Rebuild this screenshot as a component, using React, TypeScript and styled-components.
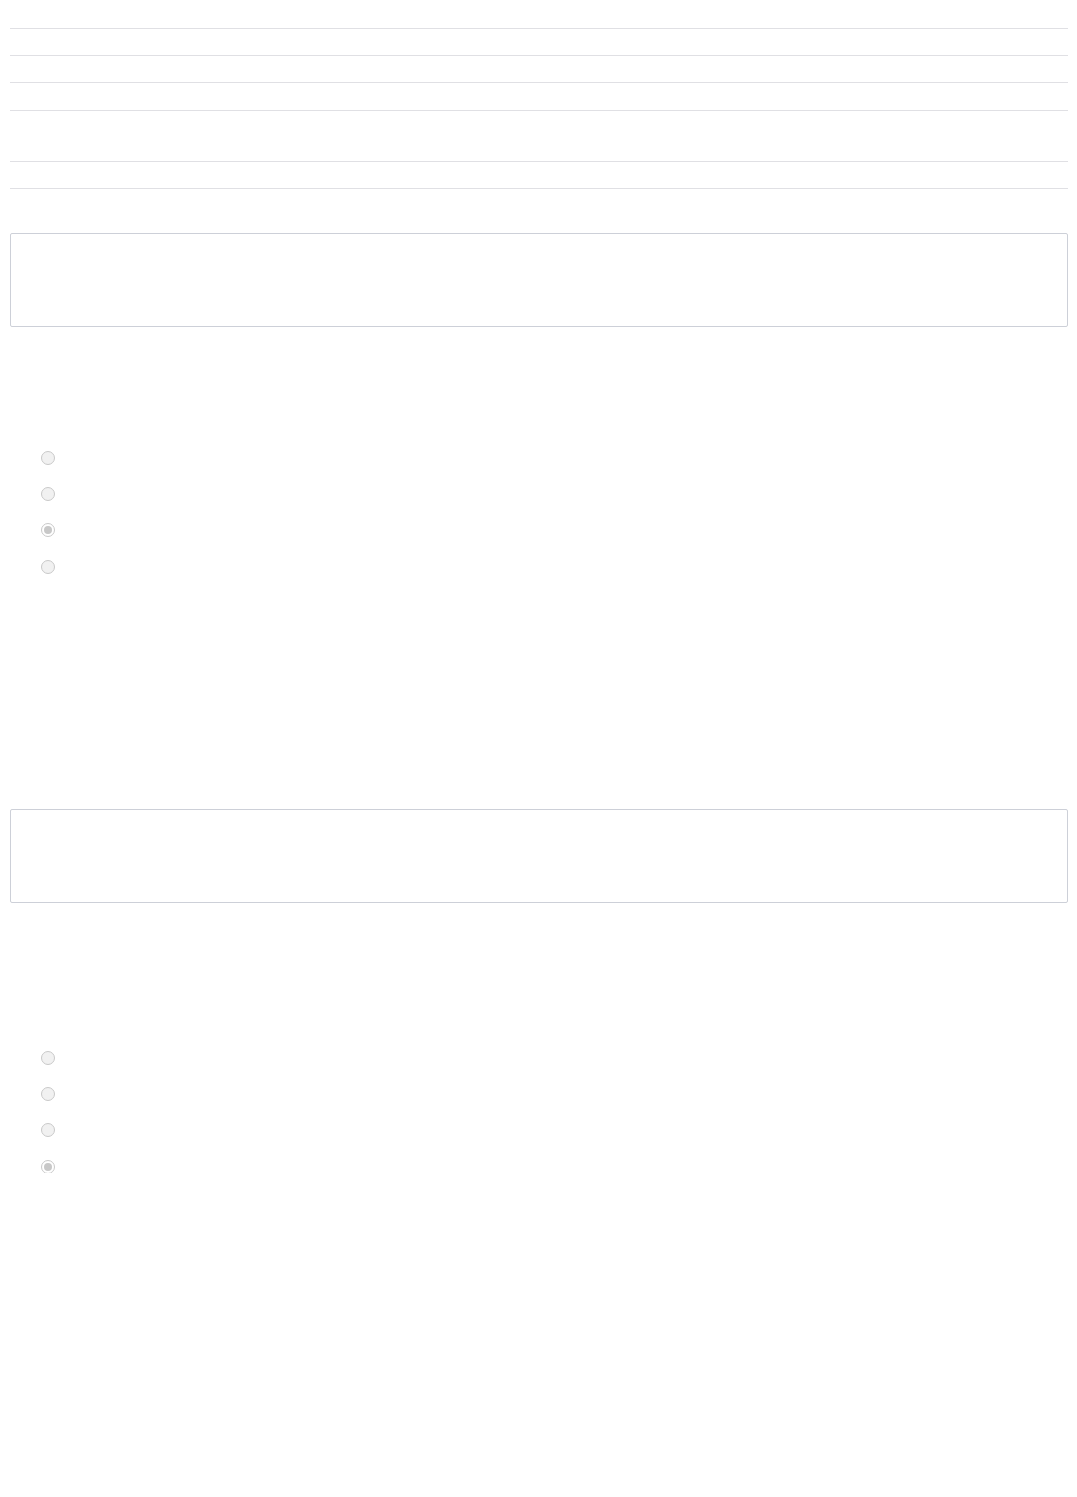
import React from "react";
import styled, { createGlobalStyle } from "styled-components";

const Global = createGlobalStyle`
  html, body { margin: 0; padding: 0; background: #ffffff; }
  body { font-family: "Liberation Sans", Arial, sans-serif; font-size: 14px; color: #333; }
`;

const Page = styled.div`
  padding: 0 9px 0 10px;
  display: flex;
  flex-direction: column;
`;

const List = styled.div`
  display: flex;
  flex-direction: column;
`;

const Row = styled.div<{ $h: number }>`
  height: ${(p) => p.$h}px;
  border-bottom: 1px solid #e0e0e4;
`;

const Box = styled.div<{ $top: number }>`
  margin-top: ${(p) => p.$top}px;
  height: 92px;
  border: 1px solid #cdd0d8;
  border-radius: 2px;
  background: #ffffff;
`;

const RadioGroup = styled.div<{ $top: number }>`
  margin-top: ${(p) => p.$top}px;
  padding-left: 31px;
  display: flex;
  flex-direction: column;
  gap: 23.4px;
`;

const RadioItem = styled.label`
  display: flex;
  align-items: center;
  height: 13px;
`;

const Dot = styled.span<{ $on?: boolean }>`
  box-sizing: border-box;
  width: 14px;
  height: 14px;
  margin: -0.5px;
  border-radius: 50%;
  border: 1px solid #c9c9c9;
  background: ${(p) => (p.$on ? "#ffffff" : "#f1f1f1")};
  display: flex;
  align-items: center;
  justify-content: center;
  &::after {
    content: "";
    display: ${(p) => (p.$on ? "block" : "none")};
    width: 8px;
    height: 8px;
    border-radius: 50%;
    background: #c8c8c8;
  }
`;

const rows = [28, 26, 26, 27, 50, 26];

export default function App() {
  return (
    <>
      <Global />
      <Page>
        <List>
          {rows.map((h, i) => (
            <Row key={i} $h={h} />
          ))}
        </List>
        <Box $top={44} />
        <RadioGroup $top={124}>
          {[false, false, true, false].map((on, i) => (
            <RadioItem key={i}>
              <Dot $on={on} />
            </RadioItem>
          ))}
        </RadioGroup>
        <Box $top={236} />
        <RadioGroup $top={148}>
          {[false, false, false, true].map((on, i) => (
            <RadioItem key={i}>
              <Dot $on={on} />
            </RadioItem>
          ))}
        </RadioGroup>
      </Page>
    </>
  );
}
